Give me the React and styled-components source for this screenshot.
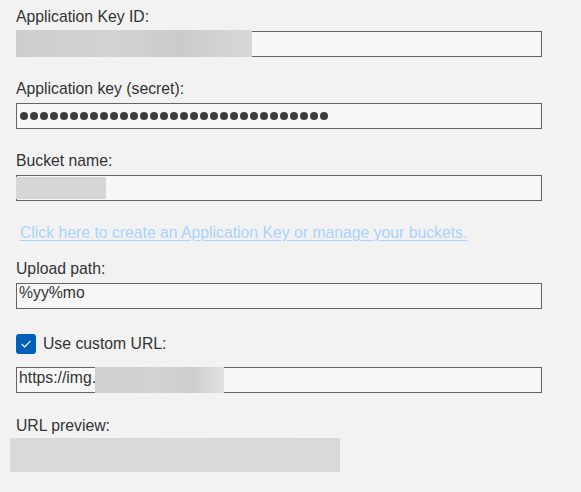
import React from "react";
import styled, { createGlobalStyle } from "styled-components";

const Global = createGlobalStyle`
  html, body { margin: 0; padding: 0; background: #f2f2f2; }
  body { font-family: "Liberation Sans", Arial, sans-serif; color: #333; }
`;

const Page = styled.div`
  width: 581px;
  height: 492px;
  box-sizing: border-box;
  padding: 8px 0 0 16px;
  display: flex;
  flex-direction: column;
  overflow: hidden;
`;

const Field = styled.div`
  display: flex;
  flex-direction: column;
  gap: ${(p) => p.$gap ?? 5}px;
  margin-top: ${(p) => p.$top ?? 0}px;
`;

const Label = styled.div`
  font-size: 15.75px;
  line-height: 18px;
  height: 18px;
  color: #333;
`;

const Input = styled.div`
  position: relative;
  box-sizing: border-box;
  width: 526px;
  height: 26px;
  background: #f7f7f7;
  border: 1px solid #646464;
  padding: ${(p) => p.$pt ?? 0}px 2px 0 2px;
  font-size: 15.75px;
  line-height: 18px;
  color: #333;
  display: flex;
  align-items: ${(p) => (p.$center ? "center" : "flex-start")};
  white-space: nowrap;
`;

const Redact = styled.div`
  position: absolute;
  top: ${(p) => p.$t}px;
  bottom: ${(p) => p.$b}px;
  left: ${(p) => p.$l}px;
  width: ${(p) => p.$w}px;
  background: ${(p) => p.$bg};
`;

const Dots = styled.div`
  display: flex;
  gap: 2px;
  padding-left: 1px;
`;

const Dot = styled.span`
  width: 8px;
  height: 8px;
  border-radius: 50%;
  background: #3d3d3d;
`;

const Link = styled.a`
  display: block;
  margin-top: 23px;
  margin-left: 4px;
  font-size: 15.75px;
  line-height: 18px;
  height: 18px;
  color: #a9d2ff;
  text-decoration: underline;
  text-underline-offset: 2px;
  cursor: pointer;
  align-self: flex-start;
`;

const CheckRow = styled.label`
  display: flex;
  align-items: center;
  gap: 7px;
  margin-top: 25px;
  height: 20px;
  font-size: 15.75px;
  line-height: 18px;
  color: #333;
`;

const CheckBox = styled.span`
  width: 20px;
  height: 20px;
  border-radius: 3px;
  background: #005fb8;
  display: flex;
  align-items: center;
  justify-content: center;
`;

const InputGap = styled.div`
  margin-top: 13px;
`;

const PreviewBox = styled.div`
  margin-left: -6px;
  width: 330px;
  height: 34px;
  background: linear-gradient(90deg, #d8d8d8, #dadada 50%, #d9d9d9);
`;

export default function App() {
  return (
    <>
      <Global />
      <Page>
        <Field>
          <Label>Application Key ID:</Label>
          <Input>
            <Redact
              $t={-2}
              $b={-1}
              $l={-1}
              $w={236}
              $bg="linear-gradient(90deg, #cdcdcd 0%, #d2d2d2 40%, #cbcbcb 70%, #d8d8d8 100%)"
            />
          </Input>
        </Field>
        <Field $top={23}>
          <Label>Application key (secret):</Label>
          <Input $center>
            <Dots>
              {Array.from({ length: 31 }).map((_, i) => (
                <Dot key={i} />
              ))}
            </Dots>
          </Input>
        </Field>
        <Field $top={23}>
          <Label>Bucket name:</Label>
          <Input>
            <Redact $t={1} $b={1} $l={-1} $w={90} $bg="#d5d5d5" />
          </Input>
        </Field>
        <Link>Click here to create an Application Key or manage your buckets.</Link>
        <Field $top={18}>
          <Label>Upload path:</Label>
          <Input>%yy%mo</Input>
        </Field>
        <CheckRow>
          <CheckBox>
            <svg width="12" height="12" viewBox="0 0 12 12">
              <path d="M1.8 6.2 L4.6 9 L10.2 3.2" fill="none" stroke="#fff" strokeWidth="1.1" strokeLinecap="round" strokeLinejoin="round" />
            </svg>
          </CheckBox>
          Use custom URL:
        </CheckRow>
        <InputGap>
          <Input $pt={1}>
            https://img.
            <Redact
              $t={-1}
              $b={-1}
              $l={78}
              $w={129}
              $bg="linear-gradient(90deg, #cfcfcf 0%, #d2d2d2 50%, #cdcdcd 75%, #e2e2e2 100%)"
            />
          </Input>
        </InputGap>
        <Field $top={24} $gap={3}>
          <Label>URL preview:</Label>
          <PreviewBox />
        </Field>
      </Page>
    </>
  );
}
